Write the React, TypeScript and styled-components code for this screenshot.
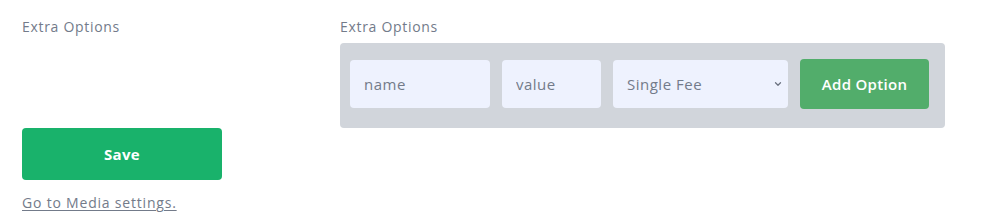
import React from 'react';
import styled, { createGlobalStyle } from 'styled-components';
import { ChevronDown } from 'lucide-react';

const GlobalStyle = createGlobalStyle`
  html, body {
    margin: 0;
    padding: 0;
    background: #fff;
  }
  body {
    font-family: 'Open Sans', 'Liberation Sans', sans-serif;
  }
`;

const Page = styled.div`
  padding: 17px 22px 0;
  width: 986px;
  box-sizing: border-box;
`;

const Row = styled.div`
  display: flex;
`;

const LabelCol = styled.div`
  width: 318px;
  flex-shrink: 0;
`;

const FieldCol = styled.div`
  display: flex;
  flex-direction: column;
  gap: 6px;
`;

const Label = styled.span`
  display: block;
  font-size: 14px;
  line-height: 20px;
  letter-spacing: 0.7px;
  color: #737b8a;
`;

const OptionsPanel = styled.div`
  display: flex;
  align-items: flex-start;
  gap: 12px;
  width: 605px;
  height: 85px;
  box-sizing: border-box;
  padding: 17px 10px 0;
  background: #d1d5db;
  border-radius: 4px;
`;

const TextInput = styled.input<{ $w: number }>`
  width: ${(p) => p.$w}px;
  height: 48px;
  box-sizing: border-box;
  padding: 0 14px;
  border: none;
  border-radius: 4px;
  background: #eef2fe;
  font-family: inherit;
  font-size: 15px;
  letter-spacing: 0.5px;
  color: #374151;
  outline: none;

  &::placeholder {
    color: #737b8a;
  }
`;

const SelectWrap = styled.div`
  position: relative;
  width: 175px;
  height: 48px;
`;

const Select = styled.select`
  width: 100%;
  height: 100%;
  appearance: none;
  border: none;
  border-radius: 4px;
  padding: 0 14px;
  background: #eef2fe;
  font-family: inherit;
  font-size: 15px;
  letter-spacing: 0.5px;
  color: #737b8a;
  outline: none;
`;

const Chevron = styled(ChevronDown)`
  position: absolute;
  right: 5px;
  top: 50%;
  transform: translateY(-50%);
  width: 10px;
  height: 10px;
  color: #6b7280;
  pointer-events: none;
`;

const AddButton = styled.button`
  width: 129px;
  height: 50px;
  margin-top: -1px;
  border: none;
  border-radius: 4px;
  background: #52ad6b;
  color: #fff;
  font-family: inherit;
  font-size: 15px;
  font-weight: 600;
  letter-spacing: 0.3px;
  cursor: pointer;
`;

const SaveButton = styled.button`
  display: block;
  width: 200px;
  height: 52px;
  border: none;
  border-radius: 4px;
  background: #19b26b;
  color: #fff;
  font-family: inherit;
  font-size: 15px;
  font-weight: 700;
  letter-spacing: 0.3px;
  cursor: pointer;
`;

const MediaLink = styled.a`
  display: inline-block;
  margin-top: 13px;
  font-size: 14px;
  line-height: 20px;
  letter-spacing: 0.8px;
  color: #737b8a;
  text-decoration: underline;
  text-underline-offset: 2px;
`;

export default function App() {
  return (
    <Page>
      <GlobalStyle />
      <Row>
        <LabelCol>
          <Label>Extra Options</Label>
        </LabelCol>
        <FieldCol>
          <Label>Extra Options</Label>
          <OptionsPanel>
            <TextInput $w={140} placeholder="name" />
            <TextInput $w={99} placeholder="value" />
            <SelectWrap>
              <Select defaultValue="single">
                <option value="single">Single Fee</option>
                <option value="multiple">Multiple Fee</option>
              </Select>
              <Chevron strokeWidth={3} />
            </SelectWrap>
            <AddButton type="button">Add Option</AddButton>
          </OptionsPanel>
        </FieldCol>
      </Row>
      <SaveButton type="button">Save</SaveButton>
      <MediaLink href="#">Go to Media settings.</MediaLink>
    </Page>
  );
}
